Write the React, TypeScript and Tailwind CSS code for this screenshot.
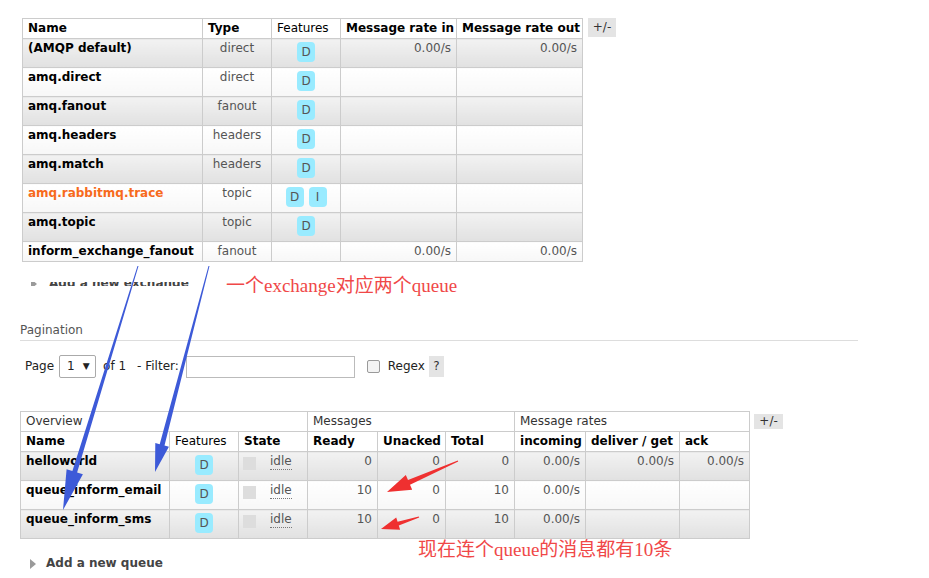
import React from 'react'

type Exchange = { name: string; type: string; features: string[]; rateIn?: string; rateOut?: string; internal?: boolean }

const exchanges: Exchange[] = [
  { name: '(AMQP default)', type: 'direct', features: ['D'], rateIn: '0.00/s', rateOut: '0.00/s' },
  { name: 'amq.direct', type: 'direct', features: ['D'] },
  { name: 'amq.fanout', type: 'fanout', features: ['D'] },
  { name: 'amq.headers', type: 'headers', features: ['D'] },
  { name: 'amq.match', type: 'headers', features: ['D'] },
  { name: 'amq.rabbitmq.trace', type: 'topic', features: ['D', 'I'], internal: true },
  { name: 'amq.topic', type: 'topic', features: ['D'] },
  { name: 'inform_exchange_fanout', type: 'fanout', features: [], rateIn: '0.00/s', rateOut: '0.00/s' },
]

type Queue = { name: string; ready: string; unacked: string; total: string; incoming: string; deliver?: string; ack?: string }

const queues: Queue[] = [
  { name: 'helloworld', ready: '0', unacked: '0', total: '0', incoming: '0.00/s', deliver: '0.00/s', ack: '0.00/s' },
  { name: 'queue_inform_email', ready: '10', unacked: '0', total: '10', incoming: '0.00/s' },
  { name: 'queue_inform_sms', ready: '10', unacked: '0', total: '10', incoming: '0.00/s' },
]

const alt1 = 'bg-linear-to-b from-[#f2f2f2] to-[#e1e1e1]'
const alt2 = 'bg-linear-to-b from-white to-[#f7f7f7]'

function Badge({ t }: { t: string }) {
  return (
    <span className="inline-flex h-[20px] w-[18px] items-center justify-center rounded-[4px] bg-[#99ebff] text-[12px] text-[#555]">
      {t}
    </span>
  )
}

function Triangle() {
  return <span className="h-0 w-0 border-y-[5px] border-l-[6px] border-y-transparent border-l-[#9a9a9a]" />
}

// tapered arrow polygon, thin at the start, arrowhead at the tip
function arrowPoints(x0: number, y0: number, x1: number, y1: number, w0: number, w1: number, headLen: number, headW: number) {
  const dx = x1 - x0
  const dy = y1 - y0
  const len = Math.hypot(dx, dy)
  const ux = dx / len
  const uy = dy / len
  const nx = -uy
  const ny = ux
  const bx = x1 - ux * headLen
  const by = y1 - uy * headLen
  const pts = [
    [x0 + (nx * w0) / 2, y0 + (ny * w0) / 2],
    [bx + (nx * w1) / 2, by + (ny * w1) / 2],
    [bx + (nx * headW) / 2, by + (ny * headW) / 2],
    [x1, y1],
    [bx - (nx * headW) / 2, by - (ny * headW) / 2],
    [bx - (nx * w1) / 2, by - (ny * w1) / 2],
    [x0 - (nx * w0) / 2, y0 - (ny * w0) / 2],
  ]
  return pts.map((p) => p.map((v) => v.toFixed(1)).join(',')).join(' ')
}

function ExchangesTable() {
  const th = 'h-[20px] whitespace-nowrap border border-[#ccc] px-[5px] py-[2px] text-left'
  return (
    <div className="ml-[22px] flex items-start pt-[18px]">
      <table className="w-[560px] table-fixed border-collapse">
        <colgroup>
          <col className="w-[180px]" />
          <col className="w-[69px]" />
          <col className="w-[69px]" />
          <col className="w-[116px]" />
          <col className="w-[126px]" />
        </colgroup>
        <thead>
          <tr>
            <th className={`${th} font-bold`}>Name</th>
            <th className={`${th} font-bold`}>Type</th>
            <th className={`${th} font-normal`}>Features</th>
            <th className={`${th} font-bold`}>Message rate in</th>
            <th className={`${th} font-bold`}>Message rate out</th>
          </tr>
        </thead>
        <tbody>
          {exchanges.map((ex, i) => {
            const bg = i % 2 === 0 ? alt1 : alt2
            const tall = ex.features.length > 0
            return (
              <tr key={ex.name}>
                <td className={`${bg} ${tall ? 'h-[29px]' : 'h-[20px]'} whitespace-nowrap border border-[#ccc] px-[5px] pt-[2px] align-top font-bold ${ex.internal ? 'text-[#f76a1c]' : 'text-black'}`}>
                  {ex.name}
                </td>
                <td className={`${bg} border border-[#ccc] px-[5px] pt-[2px] text-center align-top text-[#555]`}>{ex.type}</td>
                <td className={`${bg} border border-[#ccc] px-[5px] pt-[2px] align-top`}>
                  {tall && (
                    <div className="flex justify-center gap-[5px] pt-[1px]">
                      {ex.features.map((f) => (
                        <Badge key={f} t={f} />
                      ))}
                    </div>
                  )}
                </td>
                <td className={`${bg} border border-[#ccc] px-[5px] pt-[2px] text-right align-top text-[#555]`}>{ex.rateIn}</td>
                <td className={`${bg} border border-[#ccc] px-[5px] pt-[2px] text-right align-top text-[#555]`}>{ex.rateOut}</td>
              </tr>
            )
          })}
        </tbody>
      </table>
      <div className="ml-[5px] flex h-[19px] w-[28px] items-center justify-center bg-[#e4e4e4] text-[#333]">+/-</div>
    </div>
  )
}

function Pagination() {
  return (
    <div className="ml-[20px]">
      <div className="mt-[37px] text-[#555]">Pagination</div>
      <div className="mt-[2px] w-[838px] border-t border-[#ddd]" />
      <div className="mt-[14px] flex h-[23px] items-center text-[#222]">
        <span className="ml-[5px]">Page</span>
        <div className="ml-[5px] flex h-[23px] w-[37px] items-center rounded-[2px] border border-[#aaa] bg-white pl-[7px]">
          <span>1</span>
          <span className="ml-[8px] text-[9px]">▼</span>
        </div>
        <span className="ml-[7px]">of 1</span>
        <span className="ml-[11px] whitespace-nowrap">- Filter:</span>
        <div className="ml-[7px] h-[22px] w-[169px] shrink-0 border border-[#bbb] bg-white" />
        <div className="ml-[12px] h-[13px] w-[13px] rounded-[2px] border border-[#9a9a9a] bg-[#f3f3f3]" />
        <span className="ml-[8px]">Regex</span>
        <div className="ml-[4px] flex h-[21px] w-[15px] items-center justify-center bg-[#e4e4e4] text-[#333]">?</div>
      </div>
    </div>
  )
}

function QueuesTable() {
  const th = 'h-[20px] whitespace-nowrap border border-[#ccc] px-[5px] py-[2px] text-left'
  return (
    <div className="ml-[20px] mt-[33px] flex items-start">
      <table className="w-[729px] table-fixed border-collapse">
        <colgroup>
          <col className="w-[149px]" />
          <col className="w-[69px]" />
          <col className="w-[69px]" />
          <col className="w-[70px]" />
          <col className="w-[68px]" />
          <col className="w-[69px]" />
          <col className="w-[71px]" />
          <col className="w-[94px]" />
          <col className="w-[70px]" />
        </colgroup>
        <thead>
          <tr>
            <th colSpan={3} className={`${th} font-normal text-[#333]`}>Overview</th>
            <th colSpan={3} className={`${th} font-normal text-[#333]`}>Messages</th>
            <th colSpan={3} className={`${th} font-normal text-[#333]`}>Message rates</th>
          </tr>
          <tr>
            <th className={`${th} font-bold`}>Name</th>
            <th className={`${th} font-normal`}>Features</th>
            <th className={`${th} font-bold`}>State</th>
            <th className={`${th} font-bold`}>Ready</th>
            <th className={`${th} font-bold`}>Unacked</th>
            <th className={`${th} font-bold`}>Total</th>
            <th className={`${th} font-bold`}>incoming</th>
            <th className={`${th} font-bold`}>deliver / get</th>
            <th className={`${th} font-bold`}>ack</th>
          </tr>
        </thead>
        <tbody>
          {queues.map((q, i) => {
            const bg = i % 2 === 0 ? alt1 : alt2
            const num = `${bg} border border-[#ccc] px-[5px] pt-[2px] text-right align-top text-[#555]`
            return (
              <tr key={q.name}>
                <td className={`${bg} h-[29px] whitespace-nowrap border border-[#ccc] px-[5px] pt-[2px] align-top font-bold`}>{q.name}</td>
                <td className={`${bg} border border-[#ccc] px-[5px] pt-[2px] align-top`}>
                  <div className="flex justify-center pt-[1px]">
                    <Badge t="D" />
                  </div>
                </td>
                <td className={`${bg} border border-[#ccc] px-[4px] pt-[5px] align-top`}>
                  <div className="flex items-start">
                    <span className="h-[13px] w-[13px] bg-[#dddddd]" />
                    <span className="-mt-[3px] ml-[14px] border-b border-dotted border-[#777] leading-[15px] text-[#555]">idle</span>
                  </div>
                </td>
                <td className={num}>{q.ready}</td>
                <td className={num}>{q.unacked}</td>
                <td className={num}>{q.total}</td>
                <td className={num}>{q.incoming}</td>
                <td className={num}>{q.deliver}</td>
                <td className={num}>{q.ack}</td>
              </tr>
            )
          })}
        </tbody>
      </table>
      <div className="ml-[4px] mt-[3px] flex h-[15px] w-[29px] items-center justify-center bg-[#e4e4e4] text-[#333]">+/-</div>
    </div>
  )
}

export default function App() {
  return (
    <div className="relative h-[578px] w-[929px] overflow-hidden bg-white font-['DejaVu_Sans',Verdana,sans-serif] text-[12px] leading-[15px] text-black">
      <ExchangesTable />

      {/* "Add a new exchange" — mostly covered in the screenshot, only a thin band shows */}
      <div className="ml-[31px] mt-[20px] flex h-[4px] items-start overflow-hidden">
        <div className="-mt-[3px] flex items-center">
          <Triangle />
        </div>
        <span className="-mt-[6px] ml-[12px] whitespace-nowrap font-bold text-[#444]">Add a new exchange</span>
      </div>

      <Pagination />
      <QueuesTable />

      <div className="ml-[30px] mt-[17px] flex items-center gap-[10px]">
        <Triangle />
        <span className="font-bold text-[#444]">Add a new queue</span>
      </div>

      {/* annotations drawn over the screenshot */}
      <svg className="pointer-events-none absolute inset-0" width={929} height={578} viewBox="0 0 929 578">
        <polygon points={arrowPoints(138, 266, 63, 510, 1, 5, 40, 17)} fill="#3d5ad8" />
        <polygon points={arrowPoints(209, 266, 155, 472, 1, 5, 28, 14)} fill="#3d5ad8" />
        <polygon points={arrowPoints(458, 461, 387, 492, 1, 5, 24, 16)} fill="#ef3030" />
        <polygon points={arrowPoints(419, 517, 381, 529, 1, 4, 18, 13)} fill="#ef3030" />
      </svg>
      <div className="absolute left-[226px] top-[274px] font-['Liberation_Serif','Noto_Sans_CJK_SC',serif] text-[19px] leading-[24px] text-[#f04848]">
        一个exchange对应两个queue
      </div>
      <div className="absolute left-[418px] top-[538px] font-['Liberation_Serif','Noto_Sans_CJK_SC',serif] text-[19px] leading-[24px] text-[#f04848]">
        现在连个queue的消息都有10条
      </div>
    </div>
  )
}
